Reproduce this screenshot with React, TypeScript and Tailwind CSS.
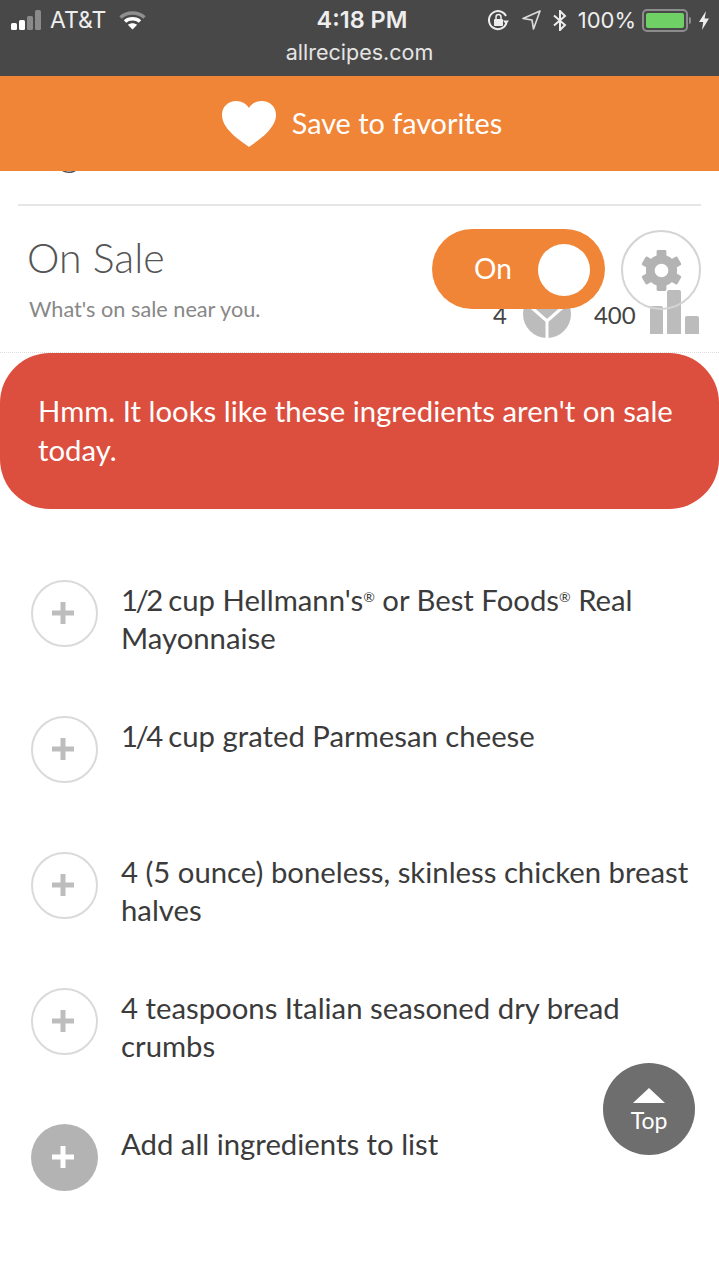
import React from 'react';

const UI_FONT = 'font-["Lato","Noto_Sans",sans-serif]';
const SYS_FONT = 'font-["Inter","Liberation_Sans",sans-serif]';

const Reg: React.FC = () => <span className="text-[14px] leading-[0] align-[9px]">®</span>;
const Num: React.FC<{ children: React.ReactNode }> = ({ children }) => (
  <span className="tracking-[-2.500px]">{children}</span>
);

const INGREDIENTS: React.ReactNode[] = [
  <><Num>1/2</Num> cup Hellmann's<Reg /> or Best Foods<Reg /> Real Mayonnaise</>,
  <><Num>1/4</Num> cup grated Parmesan cheese</>,
  '4 (5 ounce) boneless, skinless chicken breast halves',
  '4 teaspoons Italian seasoned dry bread crumbs',
];

const Plus: React.FC<{ color: string }> = ({ color }) => (
  <svg className="mr-[3px] mb-[2px]" width="22" height="22" viewBox="0 0 22 22" fill={color}>
    <rect x="8.500" y="0" width="5" height="22" />
    <rect x="0" y="8.500" width="22" height="5" />
  </svg>
);

const Gear: React.FC = () => (
  <svg width="43" height="43" viewBox="0 0 44 44" fill="#b3b3b3">
    <circle cx="22" cy="22" r="11.500" fill="none" stroke="#b3b3b3" strokeWidth="9" />
    {[0, 60, 120, 180, 240, 300].map((deg) => (
      <rect key={deg} x="17" y="1" width="10" height="9" rx="1.500" transform={`rotate(${deg} 22 22)`} />
    ))}
  </svg>
);

const StatusBar: React.FC = () => (
  <div className={`bg-[#484848] h-[76px] text-[#eeeeee] ${SYS_FONT}`}>
    <div className="grid grid-cols-[1fr_auto_1fr] items-center h-[40px] pl-[11px] pr-[10px]">
      <div className="flex items-center">
        <div className="flex items-end gap-[2px] h-[20px] mr-[9px]">
          <span className="w-[6px] h-[7px] rounded-[1.500px] bg-white" />
          <span className="w-[6px] h-[10px] rounded-[1.500px] bg-white" />
          <span className="w-[6px] h-[14px] rounded-[1.500px] bg-[#8a8a8a]" />
          <span className="w-[6px] h-[20px] rounded-[1.500px] bg-[#8a8a8a]" />
        </div>
        <span className="text-[23px] leading-none">AT&amp;T</span>
        <svg className="ml-[13px]" width="27" height="20" viewBox="0 0 27 20" fill="none">
          <path d="M1.500 7.500C8 1.500 19 1.500 25.500 7.500" stroke="#8f8f8f" strokeWidth="3.500" />
          <path d="M6 11.500C10 7.800 17 7.800 21 11.500" stroke="#ffffff" strokeWidth="3.500" />
          <path d="M13.500 19.500L8.800 14.800C11.500 12.600 15.500 12.600 18.200 14.800Z" fill="#ffffff" />
        </svg>
      </div>
      <span className="ml-[4px] text-[23.500px] leading-none font-semibold">4:18 PM</span>
      <div className="flex items-center justify-end">
        <svg width="23" height="23" viewBox="0 0 23 23" fill="none">
          <path d="M19.500 14A9 9 0 1 1 19 7" stroke="#eeeeee" strokeWidth="2" />
          <path d="M22 11.500L16 11.500L19 15.500Z" fill="#eeeeee" />
          <rect x="7" y="10" width="9" height="7" rx="1" fill="#eeeeee" />
          <path d="M9 10V8a2.500 2.500 0 0 1 5 0v2" stroke="#eeeeee" strokeWidth="1.500" />
        </svg>
        <svg className="ml-[12px]" width="19" height="20" viewBox="0 0 19 20" fill="none">
          <path d="M18 1L1 8.500L10 10L11.500 19Z" stroke="#dddddd" strokeWidth="1.600" strokeLinejoin="round" />
        </svg>
        <svg className="ml-[12px]" width="14" height="21" viewBox="0 0 14 21" fill="none">
          <path d="M1 5.500L12 15L7 20V1L12 6L1 15.500" stroke="#eeeeee" strokeWidth="2" />
        </svg>
        <span className="ml-[11px] text-[22px] leading-none">100%</span>
        <div className="ml-[6px] flex items-center">
          <div className="w-[46px] h-[23px] rounded-[5px] border-2 border-[#8c8c8c] p-[2px]">
            <div className="h-full rounded-[2px] bg-[#6fd066]" />
          </div>
          <span className="ml-[1px] w-[2px] h-[7px] rounded-r bg-[#8c8c8c]" />
        </div>
        <svg className="ml-[8px]" width="10" height="19" viewBox="0 0 10 19" fill="#eeeeee">
          <path d="M7 0L0 11H4.200L3 19L10 7.500H5.600Z" />
        </svg>
      </div>
    </div>
    <div className="text-center text-[21.500px] leading-[24px] text-[#e4e4e4]">allrecipes.com</div>
  </div>
);

const App: React.FC = () => {
  return (
    <div className={`relative h-[1278px] w-[719px] overflow-hidden bg-white text-[#3b3b3b] ${UI_FONT}`}>
      <StatusBar />

      <div className="flex items-center justify-center h-[95px] pl-[5px] bg-[#f08538] text-white">
        <svg width="54" height="46" viewBox="0 0 54 46" fill="#ffffff">
          <path d="M27 46C24 43 0 30 0 14C0 5 7 0 14 0C20 0 24.500 3 27 7C29.500 3 34 0 40 0C47 0 54 5 54 14C54 30 30 43 27 46Z" />
        </svg>
        <span className="ml-[16px] mt-[-1px] text-[28.800px] leading-none">Save to favorites</span>
      </div>

      {/* section above is scrolled under the header, only the g tail shows */}
      <div className="h-[35px] mx-[18px] border-b-2 border-[#e6e6e6] overflow-hidden">
        <div className="pl-[10px] mt-[-45px] text-[39px] leading-[50px] font-light text-[#555555]">Ingredients</div>
      </div>

      <div className="relative flex justify-between h-[147px] border-b border-dotted border-[#dddddd] pl-[27px] pr-[18px]">
        <div>
          <h2 className="mt-[28px] text-[41px] leading-[48px] font-light text-[#555555]">On Sale</h2>
          <p className="mt-[14px] ml-[2px] text-[21.700px] leading-[26px] text-[#888888]">What's on sale near you.</p>
        </div>
        <div className="relative flex items-start gap-[16px] pt-[23px]">
          <div className="absolute left-[61px] top-[84px] flex items-start text-[24px] leading-[30px] text-[#444444]">
            <span className="mt-[10px]">4</span>
            <svg className="ml-[16px]" width="48" height="48" viewBox="0 0 48 48">
              <circle cx="24" cy="24" r="24" fill="#bcbcbc" />
              <path d="M24 31V48M24 31L8 17M24 31L40 17" stroke="#ffffff" strokeWidth="3" fill="none" />
            </svg>
            <span className="ml-[23px] mt-[10px]">400</span>
            <div className="ml-[14px] flex items-end gap-[4px] h-[44px]">
              <span className="w-[13px] h-[28px] rounded-t-[2px] bg-[#bcbcbc]" />
              <span className="w-[14px] h-[44px] rounded-t-[2px] bg-[#bcbcbc]" />
              <span className="w-[14px] h-[18px] rounded-t-[2px] bg-[#bcbcbc]" />
            </div>
          </div>
          <div className="relative flex items-center w-[173px] h-[80px] rounded-full bg-[#f08538] pl-[42px] text-white">
            <span className="mt-[-2px] text-[28px] leading-none">On</span>
            <span className="absolute right-[15px] top-[15px] w-[52px] h-[52px] rounded-full bg-white" />
          </div>
          <div className="relative flex items-center justify-center w-[80px] h-[80px] mt-[1px] rounded-full border-2 border-[#d4d4d4]">
            <Gear />
          </div>
        </div>
      </div>

      <div className="flex items-start h-[156px] rounded-[50px] bg-[#dc4f3e] pl-[38px] pr-[30px] pt-[38px] text-white">
        <p className="text-[29.300px] leading-[39px]">Hmm. It looks like these ingredients aren't on sale today.</p>
      </div>

      <ul className="mt-[71px] pl-[31px] pr-[20px]">
        {INGREDIENTS.map((item, i) => (
          <li key={i} className="flex items-start h-[136px]">
            <span className="flex shrink-0 items-center justify-center w-[67px] h-[67px] rounded-full border-2 border-[#dadada]">
              <Plus color="#bdbdbd" />
            </span>
            <span className="ml-[23px] mt-[1px] text-[29.300px] leading-[38px]">{item}</span>
          </li>
        ))}
        <li className="flex items-start">
          <span className="flex shrink-0 items-center justify-center w-[67px] h-[67px] rounded-full bg-[#b3b3b3]">
            <Plus color="#ffffff" />
          </span>
          <span className="ml-[23px] mt-[1px] text-[29.300px] leading-[38px]">Add all ingredients to list</span>
        </li>
      </ul>

      <button className="absolute left-[603px] top-[1063px] flex flex-col items-center w-[92px] h-[92px] rounded-full bg-[#6e6e6e] pt-[25px] text-white">
        <svg width="32" height="15" viewBox="0 0 32 15" fill="#ffffff">
          <path d="M16 0L32 15H0Z" />
        </svg>
        <span className="mt-[3px] text-[23px] leading-[28px]">Top</span>
      </button>
    </div>
  );
};

export default App;
